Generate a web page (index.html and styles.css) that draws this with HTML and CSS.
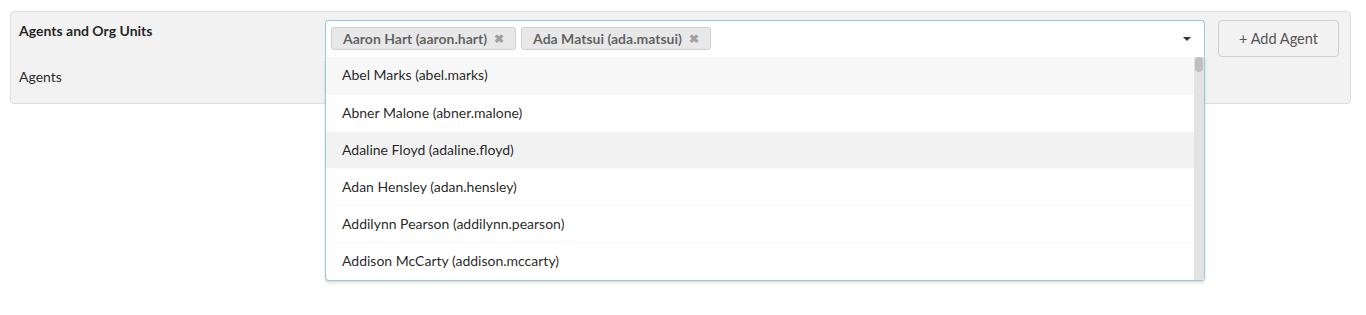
FILE: index.html
```html
<!DOCTYPE html>
<html lang="en">
<head>
    <meta charset="UTF-8">
    <meta name="viewport" content="width=device-width, initial-scale=1.0">
    <title>Agents and Org Units</title>
    <link rel="stylesheet" href="styles.css">
</head>
<body>
    <div class="panel">
        <div class="labels">
            <div class="title">Agents and Org Units</div>
            <div class="field-label">Agents</div>
        </div>
        <div class="select">
            <div class="control">
                <span class="chip">Aaron Hart (aaron.hart) <span class="chip-x">&#10006;</span></span>
                <span class="chip">Ada Matsui (ada.matsui) <span class="chip-x">&#10006;</span></span>
                <span class="caret"></span>
            </div>
            <div class="menu">
                <div class="items">
                    <div class="item selected">Abel Marks (abel.marks)</div>
                    <div class="item">Abner Malone (abner.malone)</div>
                    <div class="item hover">Adaline Floyd (adaline.floyd)</div>
                    <div class="item">Adan Hensley (adan.hensley)</div>
                    <div class="item">Addilynn Pearson (addilynn.pearson)</div>
                    <div class="item">Addison McCarty (addison.mccarty)</div>
                </div>
                <div class="scrollbar"><div class="thumb"></div></div>
            </div>
        </div>
        <button class="add-btn">+ Add Agent</button>
    </div>
</body>
</html>
```

FILE: styles.css
```css
html, body {
    min-height: 315px;
}
body {
    margin: 0;
    font-family: Lato, "Open Sans", sans-serif;
    font-size: 14px;
    color: rgba(0, 0, 0, 0.87);
    background: white;
}
.panel {
    display: flex;
    align-items: flex-start;
    margin: 11px 15px 0 10px;
    padding: 8px 11px 15px 8px;
    height: 68px;
    background-color: #f2f2f2;
    border: 1px solid #dedede;
    border-radius: 4px;
}
.labels {
    width: 306px;
}
.title {
    font-weight: bold;
    line-height: 22px;
}
.field-label {
    margin-top: 24px;
    line-height: 22px;
}
.select {
    position: relative;
    z-index: 10;
    width: 880px;
}
.control {
    display: flex;
    align-items: center;
    gap: 5px;
    height: 35px;
    padding: 0 5px;
    background: white;
    border: 1px solid #96c8da;
    border-bottom-color: transparent;
    border-radius: 4px 4px 0 0;
}
.chip {
    display: flex;
    align-items: center;
    gap: 7px;
    height: 21px;
    padding: 0 11px;
    background-color: #e8e8e8;
    border: 1px solid #d0d0d0;
    border-radius: 3px;
    color: rgba(0, 0, 0, 0.6);
    font-weight: bold;
}
.chip-x {
    font-size: 12px;
    color: #a0a0a0;
}
.caret {
    margin-left: auto;
    margin-right: 8px;
    width: 0;
    height: 0;
    border-left: 4px solid transparent;
    border-right: 4px solid transparent;
    border-top: 4px solid #333;
}
.menu {
    position: absolute;
    top: 100%;
    left: 0;
    right: 0;
    display: flex;
    height: 223px;
    background: white;
    border: 1px solid #96c8da;
    border-top: none;
    border-radius: 0 0 4px 4px;
    box-shadow: 0 2px 3px rgba(34, 36, 38, 0.15);
}
.items {
    flex: 1;
}
.item {
    height: 36px;
    line-height: 36px;
    padding-left: 16px;
    border-top: 1px solid #fafafa;
}
.item:first-child {
    border-top: none;
    height: 37px;
}
.item.selected {
    background-color: #f7f7f7;
}
.item.hover {
    background-color: #f2f2f2;
}
.scrollbar {
    width: 10px;
    background-color: #e3e3e3;
}
.thumb {
    height: 15px;
    margin: 0 1px;
    background-color: #bfbfbf;
    border-radius: 5px;
}
.add-btn {
    margin-left: 13px;
    width: 121px;
    height: 37px;
    background-color: #f2f2f2;
    border: 1px solid #cfcfcf;
    border-radius: 4px;
    font-family: Lato, "Open Sans", sans-serif;
    font-size: 14.5px;
    color: #555;
}
```
